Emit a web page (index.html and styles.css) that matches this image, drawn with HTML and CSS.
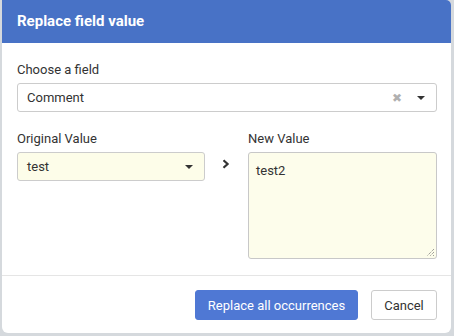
FILE: index.html
```html
<!DOCTYPE html>
<html>
<head>
<meta charset="utf-8">
<link rel="stylesheet" href="styles.css">
</head>
<body>
<div class="dialog">
  <div class="header">Replace field value</div>
  <div class="content">
    <label class="label">Choose a field</label>
    <div class="select wide">
      <span class="value">Comment</span>
      <span class="clear">&#x2716;</span>
      <span class="caret"></span>
    </div>
    <div class="row">
      <div class="col-left">
        <label class="label">Original Value</label>
        <div class="select yellow">
          <span class="value">test</span>
          <span class="caret"></span>
        </div>
      </div>
      <div class="col-mid">
        <svg width="8" height="10" viewBox="0 0 8 10"><path d="M1.5 1.2 L5.6 5 L1.5 8.8" fill="none" stroke="#333" stroke-width="2.2"/></svg>
      </div>
      <div class="col-right">
        <label class="label">New Value</label>
        <div class="textarea">test2
          <svg class="grip" width="10" height="10" viewBox="0 0 10 10"><path d="M9 2 L2 9 M9 5 L5 9 M9 8 L8 9" stroke="#777" stroke-width="1" stroke-dasharray="1 1"/></svg>
        </div>
      </div>
    </div>
  </div>
  <div class="footer">
    <button class="btn primary">Replace all occurrences</button>
    <button class="btn secondary">Cancel</button>
  </div>
</div>
</body>
</html>
```
FILE: styles.css
```css
html, body {
  margin: 0;
  padding: 0;
  background: #d5d9dd;
  font-family: Roboto, "Noto Sans", sans-serif;
  color: #333;
}
body {
  width: 454px;
  height: 336px;
  overflow: hidden;
}
.dialog {
  margin-left: 2px;
  width: 449px;
  height: 333px;
  background: #fff;
  border-radius: 0 5px 6px 6px;
  display: flex;
  flex-direction: column;
  overflow: hidden;
}
.header {
  height: 43px;
  background: #4872c6;
  color: #fff;
  font-weight: bold;
  font-size: 15px;
  line-height: 43px;
  padding-left: 15px;
  flex-shrink: 0;
}
.content {
  padding: 19px 14px 0 15px;
  flex: 1;
  display: flex;
  flex-direction: column;
}
.label {
  display: block;
  font-size: 13px;
  line-height: 16px;
  color: #333;
  margin-bottom: 5px;
}
.select {
  box-sizing: border-box;
  height: 29px;
  border: 1px solid #ccc;
  border-radius: 3px;
  display: flex;
  align-items: center;
  padding: 0 0 0 9px;
  font-size: 13px;
  color: #333;
}
.select .value {
  flex: 1;
}
.clear {
  color: #b0b0b0;
  font-size: 12px;
  margin-right: 15px;
}
.caret {
  width: 0;
  height: 0;
  border-left: 4px solid transparent;
  border-right: 4px solid transparent;
  border-top: 4px solid #333;
  margin-right: 11px;
}
.yellow {
  background: #fdfde9;
}
.row {
  display: flex;
  margin-top: 19px;
}
.col-left {
  width: 188px;
}
.col-mid {
  width: 43px;
  display: flex;
  justify-content: center;
  padding-top: 28px;
  box-sizing: border-box;
  padding-right: 2px;
}
.col-mid svg {
  display: block;
}
.col-right {
  width: 189px;
}
.textarea {
  position: relative;
  box-sizing: border-box;
  height: 107px;
  margin-top: 1px;
  background: #fdfdeb;
  border: 1px solid #c8c8c8;
  border-radius: 3px;
  padding: 10px 7px;
  font-size: 13px;
  line-height: 16px;
  color: #333;
}
.grip {
  position: absolute;
  right: 1px;
  bottom: 1px;
}
.footer {
  border-top: 1px solid #e5e5e5;
  margin-top: 16px;
  height: 58px;
  box-sizing: border-box;
  padding: 14px 14px 0 0;
  display: flex;
  justify-content: flex-end;
  gap: 13px;
  flex-shrink: 0;
}
.btn {
  height: 30px;
  box-sizing: border-box;
  border-radius: 3px;
  font-family: Roboto, "Noto Sans", sans-serif;
  font-size: 13px;
  padding: 0;
  cursor: pointer;
}
.primary {
  width: 163px;
  background: #4f78d4;
  border: 1px solid #4f78d4;
  color: #fff;
}
.secondary {
  width: 66px;
  background: #fff;
  border: 1px solid #ccc;
  color: #333;
}
```
